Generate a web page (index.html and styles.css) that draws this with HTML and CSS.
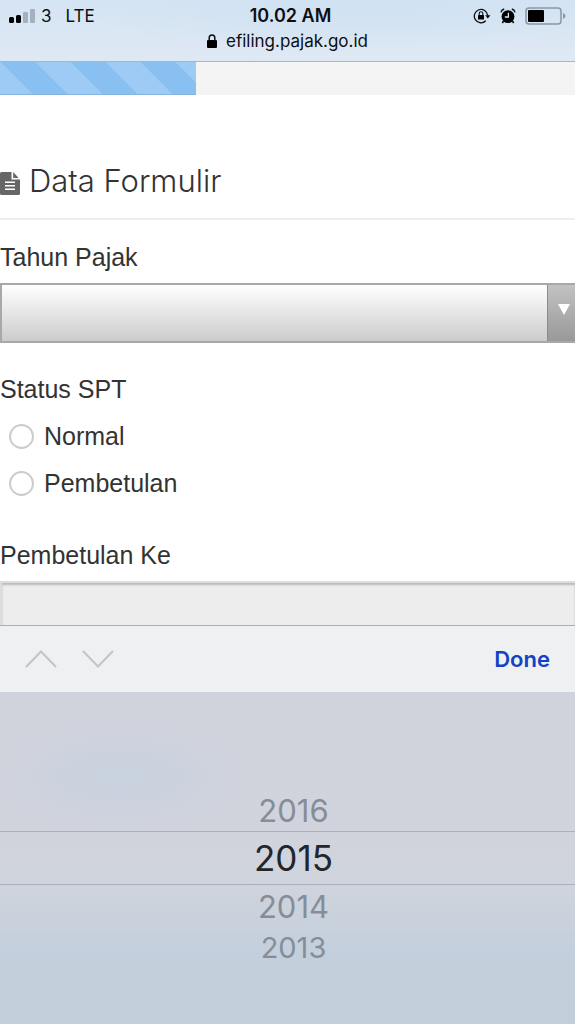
FILE: index.html
```html
<!DOCTYPE html>
<html lang="id">
<head>
    <meta charset="UTF-8">
    <meta name="viewport" content="width=device-width, initial-scale=1.0">
    <title>Data Formulir</title>
    <link rel="stylesheet" href="styles.css">
</head>
<body>
    <header class="browser">
        <div class="status">
            <div class="carrier">
                <svg class="signal" width="26" height="16" viewBox="0 0 26 16">
                    <rect x="0" y="9" width="5" height="6" rx="1.5"/>
                    <rect x="7" y="7" width="5" height="8" rx="1.5"/>
                    <rect class="off" x="14" y="4" width="5" height="11" rx="1"/>
                    <rect class="off" x="21" y="1" width="5" height="14" rx="1"/>
                </svg>
                <span>3</span>
                <span class="network">LTE</span>
            </div>
            <div class="time">10.02 AM</div>
            <div class="indicators">
                <svg width="18" height="16" viewBox="0 0 18 16">
                    <path d="M12.8 12.8A6.7 6.7 0 1 1 14.7 7.4" fill="none" stroke="#0b0f14" stroke-width="1.3"/>
                    <path d="M12.2 7.2h5.2L14.8 10.4z"/>
                    <rect x="5" y="7" width="6" height="4.5" rx=".5"/>
                    <path d="M6.2 7.2V5.6a1.8 1.8 0 0 1 3.6 0v1.6" fill="none" stroke="#0b0f14" stroke-width="1.1"/>
                </svg>
                <svg class="alarm" width="16" height="16" viewBox="0 0 16 16">
                    <circle cx="8" cy="8.6" r="6.4"/>
                    <path d="M.9 4.4Q1.6 1.7 4.2 1M15.1 4.4Q14.4 1.7 11.8 1" fill="none" stroke="#0b0f14" stroke-width="1.3"/>
                    <path d="M3.6 13l-1.3 2M12.4 13l1.3 2" stroke="#0b0f14" stroke-width="1.6"/>
                    <path d="M8.4 4.8v4.2H4.8" fill="none" stroke="#d6e5f3" stroke-width="1.3"/>
                </svg>
                <svg width="41" height="18" viewBox="0 0 41 18">
                    <rect x="1" y="1" width="35" height="16" rx="3" fill="none" stroke="#8a97a3" stroke-width="1.5"/>
                    <rect x="3" y="3" width="16" height="12" rx="1"/>
                    <path d="M38 6q2.5 1 2.5 3T38 12z" fill="#8a97a3"/>
                </svg>
            </div>
        </div>
        <div class="address">
            <svg width="10" height="14" viewBox="0 0 10 14">
                <rect x="0" y="6" width="10" height="8" rx="1"/>
                <path d="M2.2 7V3.8a2.8 2.8 0 0 1 5.6 0V7" fill="none" stroke="#0b0f14" stroke-width="1.5"/>
            </svg>
            <span>efiling.pajak.go.id</span>
        </div>
    </header>

    <main>
        <div class="progress">
            <div class="bar" style="width: 34%"></div>
        </div>
        <form>
            <h1>
                <svg width="20" height="23" viewBox="0 0 20 23">
                    <path d="M0 1.5Q0 0 1.5 0H11.5V7.5H20V21.5Q20 23 18.5 23H1.5Q0 23 0 21.5z"/>
                    <path d="M13.2 0L18.6 6H13.2z"/>
                    <path d="M5 10.2h10M5 13.7h10M5 17.2h10" stroke="#fff" stroke-width="1.4"/>
                </svg>
                Data Formulir
            </h1>
            <label class="caption" for="tahun">Tahun Pajak</label>
            <div class="select-box">
                <select id="tahun">
                    <option selected></option>
                    <option>2016</option>
                    <option>2015</option>
                    <option>2014</option>
                    <option>2013</option>
                </select>
                <svg class="arrow" width="12" height="11" viewBox="0 0 12 11">
                    <path d="M0 0H12L6 11z"/>
                </svg>
            </div>
            <fieldset>
                <legend class="caption">Status SPT</legend>
                <label class="choice"><input type="radio" name="status">Normal</label>
                <label class="choice"><input type="radio" name="status">Pembetulan</label>
            </fieldset>
            <label class="caption" for="ke">Pembetulan Ke</label>
            <input class="text" type="text" id="ke" disabled>
        </form>
    </main>

    <section class="keyboard">
        <div class="toolbar">
            <button type="button" aria-label="Sebelumnya">
                <svg width="32" height="18" viewBox="0 0 32 18"><path d="M1 17L16 1.5L31 17"/></svg>
            </button>
            <button type="button" aria-label="Berikutnya">
                <svg width="32" height="18" viewBox="0 0 32 18"><path d="M1 1L16 16.5L31 1"/></svg>
            </button>
            <button type="button" class="done">Done</button>
        </div>
        <div class="picker">
            <button type="button" class="year">2016</button>
            <button type="button" class="year current">2015</button>
            <button type="button" class="year">2014</button>
            <button type="button" class="year far">2013</button>
        </div>
    </section>
</body>
</html>
```

FILE: styles.css
```css
*{
    margin: 0;
    padding: 0;
    box-sizing: border-box;
}
body{
    min-height: 100vh;
    display: flex;
    flex-direction: column;
    background-color: #fff;
    color: #333;
    font-family: "Liberation Sans", Arial, sans-serif;
    font-size: 25px;
}
svg{
    display: block;
    flex: none;
}
button{
    border: 0;
    background: none;
    font-family: Inter, sans-serif;
    cursor: pointer;
}

/* browser bar */
.browser{
    height: 62px;
    padding-top: 4px;
    border-bottom: 1px solid #aab5c2;
    background: radial-gradient(ellipse at 62% 0, #cfe1f2, transparent 60%), linear-gradient(#d5e4f3, #dfe9f4);
    color: #0b0f14;
    font-family: Inter, sans-serif;
    font-size: 18px;
    line-height: 24px;
}
.status{
    display: grid;
    grid-template-columns: 1fr auto 1fr;
    align-items: center;
    padding: 0 9px;
}
.carrier, .indicators{
    display: flex;
    align-items: center;
}
.carrier{
    gap: 6px;
    font-size: 17px;
}
.signal .off{
    fill: #a3b1be;
}
.network{
    margin-left: 8px;
}
.time{
    font-weight: 600;
    padding-left: 6px;
}
.indicators{
    justify-content: flex-end;
    gap: 9px;
}
.address{
    display: flex;
    justify-content: center;
    align-items: center;
    gap: 9px;
    font-size: 17px;
    line-height: 26px;
}

/* progress */
.progress{
    height: 33px;
    background-color: #f4f4f4;
}
.bar{
    height: 100%;
    border-bottom: 1px solid #85b4df;
    background: linear-gradient(45deg, #88c0f1 25%, #9dcbf5 25%, #9dcbf5 50%, #88c0f1 50%, #88c0f1 75%, #9dcbf5 75%);
    background-size: 70px 70px;
}

/* form */
h1{
    display: flex;
    align-items: center;
    gap: 9px;
    margin-top: 66px;
    padding-bottom: 17px;
    border-bottom: 2px solid #eee;
    font-family: Inter, sans-serif;
    font-size: 31px;
    font-weight: 300;
    line-height: 40px;
}
h1 svg{
    margin-top: 5px;
    fill: #666;
}
.caption{
    display: block;
    line-height: 32px;
}
h1 + .caption{
    margin-top: 21px;
}
.select-box{
    position: relative;
    margin-top: 10px;
    margin-bottom: 30px;
}
select{
    display: block;
    appearance: none;
    width: 100%;
    height: 60px;
    border: 2px solid #a8a8a8;
    border-right: 0;
    border-radius: 0;
    background:
        linear-gradient(#c2c2c2, #999) right / 27px 100% no-repeat,
        linear-gradient(#8c8c8c, #8c8c8c) right / 28px 100% no-repeat,
        linear-gradient(#fff, #ccc);
    font-size: 25px;
}
.arrow{
    position: absolute;
    right: 5px;
    top: 21px;
    fill: #fff;
    pointer-events: none;
}
fieldset{
    border: 0;
    margin-bottom: 32px;
}
legend{
    margin-bottom: 8px;
}
.choice{
    display: flex;
    align-items: center;
    gap: 10px;
    height: 47px;
    padding-left: 9px;
}
.choice input{
    appearance: none;
    width: 25px;
    height: 25px;
    border: 2px solid #ccc;
    border-radius: 50%;
    background-color: #fff;
}
.text{
    display: block;
    width: 100%;
    height: 44px;
    margin-top: 10px;
    border: 2px solid #ddd;
    border-bottom: 0;
    border-right: 0;
    background-color: #ededed;
    box-shadow: inset 0 2px 2px #bbb;
    font-size: 25px;
}

/* keyboard */
.keyboard{
    flex: 1;
    display: flex;
    flex-direction: column;
}
.toolbar{
    display: flex;
    align-items: center;
    gap: 25px;
    height: 67px;
    padding: 0 25px;
    border-top: 1px solid #abaeb3;
    background-color: #eff0f2;
}
.toolbar path{
    fill: none;
    stroke: #c3c4c7;
    stroke-width: 2;
}
.done{
    margin-left: auto;
    color: #1243c4;
    font-size: 22px;
    font-weight: 600;
}
.picker{
    flex: 1;
    padding-top: 97px;
    background:
        radial-gradient(ellipse 120px 55px at 120px 85px, #c8d2df, transparent),
        linear-gradient(#d0d3dc, #d0d4dc 57%, #c3cfdc 78%, #c3cedb);
}
.year{
    display: block;
    width: 100%;
    height: 42px;
    padding-left: 12px;
    color: #868d97;
    font-size: 31px;
}
.year.current{
    height: 54px;
    border-top: 1px solid #aab1bb;
    border-bottom: 1px solid #aab1bb;
    color: #22262b;
    font-size: 35px;
}
.year.far{
    height: 40px;
    font-size: 29px;
}
```
